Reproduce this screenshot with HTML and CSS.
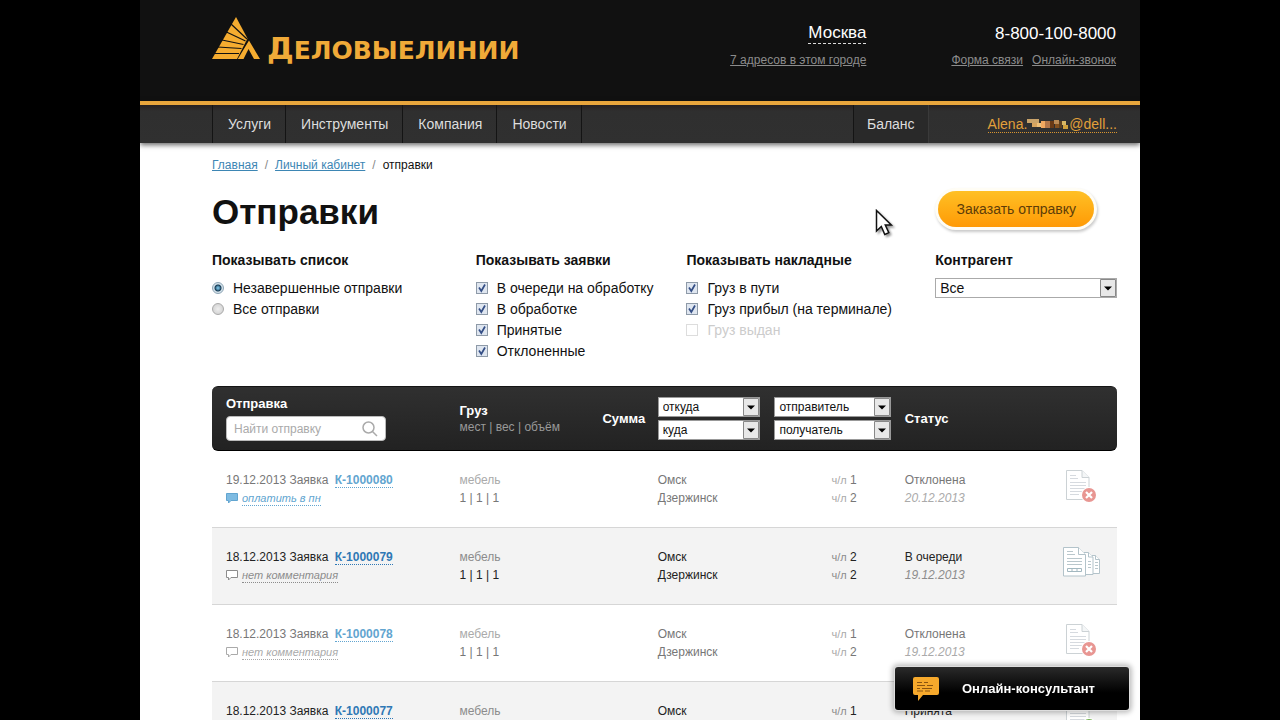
FILE: index.html
```html
<!DOCTYPE html>
<html lang="ru">
<head>
<meta charset="utf-8">
<meta name="viewport" content="width=device-width, initial-scale=1">
<title>Отправки</title>
<link rel="stylesheet" href="styles.css">
</head>
<body>
<svg class="sprite" aria-hidden="true">
  <symbol id="doc" viewBox="0 0 24 30">
    <path d="M.5.5h15.500l7 7v22H.5z" fill="#fff" stroke="#ccd2d5"/>
    <path d="M16 .5v7h7" fill="#f4f6f7" stroke="#ccd2d5"/>
    <path d="M4 5.500h6M4 8.500h8M4 12.500h16M4 15.500h16M4 18.500h16M4 21.500h16M4 24.500h9" stroke="#d6dadf"/>
  </symbol>
  <symbol id="doc-rejected" viewBox="0 0 32 34">
    <use href="#doc" width="24" height="30"/>
    <circle cx="23" cy="25" r="8" fill="#fff"/>
    <circle cx="23" cy="25" r="7" fill="#e89692"/>
    <path d="M20 22l6 6M26 22l-6 6" stroke="#fff" stroke-width="2.200"/>
  </symbol>
  <symbol id="doc-accepted" viewBox="0 0 32 34">
    <use href="#doc" width="24" height="30"/>
    <circle cx="23" cy="25" r="8" fill="#fff"/>
    <circle cx="23" cy="25" r="7" fill="#6fae4a"/>
    <path d="M19.500 25l2.500 3 4.500-6" fill="none" stroke="#fff" stroke-width="2"/>
  </symbol>
  <symbol id="doc-queue" viewBox="0 0 38 30">
    <g fill="#fff" stroke="#b3c3ca">
      <path d="M24.500 8.500h8l4 4v14h-12z"/><path d="M32.500 8.500v4h4"/>
      <path d="M18.500 5.500h7l4.500 4.500v17.500h-11.500z"/><path d="M25.500 5.500v4.500h4.500"/>
      <path d="M.5.500h15l7 7v21.500h-22z"/><path d="M15.500.500v7h7"/>
    </g>
    <path d="M4 4.500h6M4 7.500h8M4 11.500h15M4 14.500h15M4 17.500h15M25 14.500h3M25 17.500h3M25 20.500h3M32 15.500h3M32 18.500h3M32 21.500h3" stroke="#b9c7cc"/>
    <path d="M4.500 21.500h14v3h-14zM9 21.500v3M14 21.500v3" fill="none" stroke="#a3b8c0"/>
  </symbol>
  <symbol id="note" viewBox="0 0 12 11">
    <path d="M.5.500h11v7H5L2.500 10V7.500h-2z"/>
  </symbol>
</svg>

<div class="page">
  <header class="top">
    <a class="logo" href="#">
      <svg class="logo-mark" viewBox="0 0 48 42" aria-hidden="true">
        <path d="M24 0L35.500 21.500L25 42H0z" fill="#f5ac30"/>
        <path d="M37 23.500L48 42H42L36.500 32L31.500 42H25.800z" fill="#f5ac30"/>
        <path d="M35 22L19 7M33.500 24L14.500 15M31.500 27.500L10 23M29.500 31.500L5.500 30M27 36.500L1 36.500" fill="none" stroke="#111" stroke-width="1.200"/>
      </svg>
      <span class="logo-name"><span class="logo-cap">Д</span>ЕЛОВЫЕЛИНИИ</span>
    </a>
    <div class="city">
      <a class="city-name" href="#">Москва</a>
      <a class="sub" href="#">7 адресов в этом городе</a>
    </div>
    <div class="phone">
      <span class="number">8-800-100-8000</span>
      <span class="phone-links"><a class="sub" href="#">Форма связи</a><a class="sub" href="#">Онлайн-звонок</a></span>
    </div>
  </header>

  <nav class="nav">
    <ul class="menu">
      <li><a href="#">Услуги</a></li>
      <li><a href="#">Инструменты</a></li>
      <li><a href="#">Компания</a></li>
      <li><a href="#">Новости</a></li>
    </ul>
    <a class="balance" href="#">Баланс</a>
    <a class="account" href="#">Alena.<svg class="mosaic" viewBox="0 0 42 12" aria-hidden="true">
      <path d="M0 0h12v4H0z" fill="#c9a36a"/><path d="M5 4h5v4H5z" fill="#d7a45f"/><path d="M10 4h5v4h-5z" fill="#eec07a"/><path d="M14 2h4v7h-4z" fill="#f2a860"/>
      <path d="M18 2h5v7h-5z" fill="#b3764a"/><path d="M23 2h4v7h-4z" fill="#693a16"/><path d="M27 1h5v4h-5z" fill="#b98a55"/><path d="M28 5h4v4h-4z" fill="#83501f"/>
      <path d="M32 2h3v7h-3z" fill="#5c4020"/><path d="M35 2h4v4h-4z" fill="#d8b765"/><path d="M36 6h5v4h-5z" fill="#d0a13c"/></svg>@dell...</a>
  </nav>

  <main class="content">
    <ol class="crumbs">
      <li><a href="#">Главная</a></li>
      <li><a href="#">Личный кабинет</a></li>
      <li>отправки</li>
    </ol>
    <div class="heading">
      <h1>Отправки</h1>
      <button class="order" type="button">Заказать отправку</button>
    </div>

    <form class="filters">
      <fieldset>
        <legend>Показывать список</legend>
        <label class="option"><input type="radio" name="list" checked>Незавершенные отправки</label>
        <label class="option"><input type="radio" name="list">Все отправки</label>
      </fieldset>
      <fieldset>
        <legend>Показывать заявки</legend>
        <label class="option"><input type="checkbox" checked>В очереди на обработку</label>
        <label class="option"><input type="checkbox" checked>В обработке</label>
        <label class="option"><input type="checkbox" checked>Принятые</label>
        <label class="option"><input type="checkbox" checked>Отклоненные</label>
      </fieldset>
      <fieldset>
        <legend>Показывать накладные</legend>
        <label class="option"><input type="checkbox" checked>Груз в пути</label>
        <label class="option"><input type="checkbox" checked>Груз прибыл (на терминале)</label>
        <label class="option disabled"><input type="checkbox" disabled>Груз выдан</label>
      </fieldset>
      <div class="partner">
        <label for="partner">Контрагент</label>
        <select class="select" id="partner"><option>Все</option></select>
      </div>
    </form>

    <table class="orders">
      <colgroup><col class="c-order"><col class="c-cargo"><col class="c-sum"><col class="c-route"><col class="c-party"><col class="c-status"><col class="c-doc"></colgroup>
      <thead>
        <tr>
          <th scope="col">
            <label for="find">Отправка</label>
            <span class="search">
              <input id="find" type="text" placeholder="Найти отправку">
              <svg viewBox="0 0 16 16" aria-hidden="true"><circle cx="6.500" cy="6.500" r="5.500"/><path d="M10.500 10.500l4.500 4.500"/></svg>
            </span>
          </th>
          <th scope="col">Груз<span class="hint">мест | вес | объём</span></th>
          <th scope="col">Сумма</th>
          <th scope="col"><span class="pair">
            <select class="select small" aria-label="Откуда"><option>откуда</option></select>
            <select class="select small" aria-label="Куда"><option>куда</option></select></span></th>
          <th scope="col"><span class="pair">
            <select class="select small" aria-label="Отправитель"><option>отправитель</option></select>
            <select class="select small" aria-label="Получатель"><option>получатель</option></select></span></th>
          <th scope="col">Статус</th>
          <td></td>
        </tr>
      </thead>
      <tbody>
        <tr class="muted">
          <td>19.12.2013 Заявка <a class="code" href="#">К-1000080</a><div class="comment filled"><svg aria-hidden="true"><use href="#note"/></svg><a href="#">оплатить в пн</a></div></td>
          <td><span class="soft">мебель</span><br>1 | 1 | 1</td>
          <td></td>
          <td>Омск<br>Дзержинск</td>
          <td class="party"><small>ч/л</small> 1<br><small>ч/л</small> 2</td>
          <td>Отклонена<br><i class="soft">20.12.2013</i></td>
          <td class="doc"><svg class="icon" aria-hidden="true"><use href="#doc-rejected"/></svg></td>
        </tr>
        <tr class="shaded">
          <td>18.12.2013 Заявка <a class="code" href="#">К-1000079</a><div class="comment"><svg aria-hidden="true"><use href="#note"/></svg><a href="#">нет комментария</a></div></td>
          <td><span class="soft">мебель</span><br>1 | 1 | 1</td>
          <td></td>
          <td>Омск<br>Дзержинск</td>
          <td class="party"><small>ч/л</small> 2<br><small>ч/л</small> 2</td>
          <td>В очереди<br><i class="soft">19.12.2013</i></td>
          <td class="doc"><svg class="icon queue" aria-hidden="true"><use href="#doc-queue"/></svg></td>
        </tr>
        <tr class="muted">
          <td>18.12.2013 Заявка <a class="code" href="#">К-1000078</a><div class="comment"><svg aria-hidden="true"><use href="#note"/></svg><a href="#">нет комментария</a></div></td>
          <td><span class="soft">мебель</span><br>1 | 1 | 1</td>
          <td></td>
          <td>Омск<br>Дзержинск</td>
          <td class="party"><small>ч/л</small> 1<br><small>ч/л</small> 2</td>
          <td>Отклонена<br><i class="soft">19.12.2013</i></td>
          <td class="doc"><svg class="icon" aria-hidden="true"><use href="#doc-rejected"/></svg></td>
        </tr>
        <tr class="shaded">
          <td>18.12.2013 Заявка <a class="code" href="#">К-1000077</a></td>
          <td><span class="soft">мебель</span></td>
          <td></td>
          <td>Омск</td>
          <td class="party"><small>ч/л</small> 1</td>
          <td>Принята</td>
          <td class="doc"><svg class="icon" aria-hidden="true"><use href="#doc-accepted"/></svg></td>
        </tr>
      </tbody>
    </table>
  </main>

  <svg class="cursor" viewBox="0 0 20 30" aria-hidden="true"><path d="M1.500 1.500v20.500l4.800-4.500 3.500 8 4-1.800-3.500-7.700h6z" fill="#fff" stroke="#111" stroke-width="1.500"/></svg>
</div>

<button class="consultant" type="button">
  <svg viewBox="0 0 26 24" aria-hidden="true">
    <path d="M2 0h22q2 0 2 2v14q0 2-2 2H10l-5 6v-6H2q-2 0-2-2V2q0-2 2-2z" fill="#f6a92c"/>
    <path d="M4 5.500h5M11 5.500h4M4 8.500h8M14 8.500h6M4 11.500h3M9 11.500h10M4 14h6M12 14h5" stroke="#8a5410"/>
  </svg>
  Онлайн-консультант
</button>
</body>
</html>
```
FILE: styles.css
```css
* { box-sizing: border-box; }

body {
  margin: 0;
  background: #000;
  color: #111;
  font: 13px/18px "Liberation Sans", Arial, sans-serif;
}

button, input, select { font-family: inherit; }
ul, ol { margin: 0; padding: 0; list-style: none; }
.sprite { position: absolute; width: 0; height: 0; }

.page {
  position: relative;
  max-width: 1000px;
  min-height: 100vh;
  margin: 0 auto;
  background: #fff;
}

/* Header */
.top {
  display: flex;
  align-items: flex-start;
  min-height: 101px;
  padding: 17px 24px 0 72px;
  background: #111;
}
.logo { display: flex; gap: 7px; color: #f0aa38; text-decoration: none; }
.logo-mark { width: 48px; height: 42px; }
.logo-name { padding-top: 20px; font: bold 25px/24px "DejaVu Sans", sans-serif; }
.logo-cap { font-size: 30px; }
.city, .phone { display: flex; flex-direction: column; align-items: flex-end; gap: 8px; padding-top: 6px; }
.city { margin-left: auto; }
.phone { margin-left: 85px; }
.city-name { border-bottom: 1px dashed #ddd; color: #fff; font-size: 17px; line-height: 20px; text-decoration: none; }
.number { color: #fff; font-size: 17px; line-height: 21px; }
.phone-links { display: flex; gap: 9px; }
.sub { color: #8c8c8c; font-size: 12px; line-height: 16px; }

.nav {
  display: flex;
  position: relative;
  height: 42px;
  padding: 0 23px 0 72px;
  border-top: 4px solid #e8a53c;
  background: linear-gradient(#262020, #2f2f2f 6px, #303030);
  box-shadow: 0 2px 5px rgba(0, 0, 0, .6);
  font-size: 14px;
  line-height: 38px;
}
.menu { display: flex; border-left: 1px solid #141414; }
.menu li { border-right: 1px solid #141414; }
.menu a { display: block; padding: 0 14px 0 15px; color: #ddd; text-decoration: none; }
.balance { margin-left: auto; padding: 0 13px; border-left: 1px solid #141414; border-right: 1px solid #3a3a3a; background: #292929; color: #ddd; text-decoration: none; }
.account { align-self: center; margin-left: 59px; border-bottom: 1px dotted #d9952f; color: #e2a03a; line-height: 16px; text-decoration: none; }
.mosaic { width: 42px; height: 12px; vertical-align: -2px; }

/* Title */
.content { padding: 14px 23px 0 72px; }
.crumbs { display: flex; font-size: 12px; line-height: 16px; }
.crumbs li + li::before { content: "/"; padding: 0 7px; color: #888; }
.crumbs a { color: #3d86b4; }
.heading { display: flex; justify-content: space-between; align-items: flex-start; margin-top: 18px; padding-right: 23px; }
h1 { margin: 0; font-size: 35px; line-height: 42px; }
.order {
  height: 36px;
  padding: 0 18px;
  border: 0;
  border-radius: 18px;
  background: linear-gradient(#ffc025, #ff9a05);
  box-shadow: 0 0 0 3px #fffdf5, 1px 2px 3px 3px #c9c9c9;
  color: #5d3d08;
  font-size: 14px;
}

/* Filters */
.filters { display: grid; grid-template-columns: 264fr 211fr 249fr 182fr; margin-top: 18px; min-height: 135px; }
fieldset { min-width: 0; margin: 0; padding: 0; border: 0; }
legend, .partner label { display: block; margin-bottom: 9px; padding: 0; font-size: 14px; font-weight: bold; line-height: 18px; }
.option { display: flex; align-items: center; gap: 9px; font-size: 14px; line-height: 21px; white-space: nowrap; }
.option input { flex: none; appearance: none; width: 12px; height: 12px; margin: 0 0 2px; border: 1px solid #8e9aa8; background: #dfe6f0; }
.option input[type="radio"] { border-color: #aaa; border-radius: 50%; background: radial-gradient(#eee, #ccc); }
.option input[type="radio"]:checked { border-color: #8ea5b5; background: radial-gradient(circle, #6fb2d4 0 1px, #173b54 3px, #d4e2eb 4px); }
.option input[type="checkbox"]:checked { background: #dfe6f0 url("data:image/svg+xml,%3Csvg xmlns='http://www.w3.org/2000/svg' viewBox='0 0 10 10'%3E%3Cpath d='M2 4.500L4.300 8L8 1.500' fill='none' stroke='%23354f86' stroke-width='1.700'/%3E%3C/svg%3E") center / 10px 10px; }
.option input:disabled { border-color: #ddd; background: #fff; }
.disabled { color: #ccc; }

.select {
  appearance: none;
  display: block;
  width: 100%;
  height: 20px;
  padding: 0 20px 0 4px;
  border: 1px solid #aaa;
  border-radius: 0;
  background: #fff url("data:image/svg+xml,%3Csvg xmlns='http://www.w3.org/2000/svg' viewBox='0 0 16 18'%3E%3Cpath d='M.5.500h15v17H.5z' fill='%23e8e8e8' stroke='%23888'/%3E%3Cpath d='M4 7.500h8l-4 4z'/%3E%3C/svg%3E") right center / 16px 18px no-repeat;
  color: #111;
  font-size: 14px;
}
.small { font-size: 12px; border: 1px solid #999; }

/* Orders */
.orders { width: 100%; table-layout: fixed; border-spacing: 0; }
.c-order { width: 25.800%; }
.c-cargo { width: 15.800%; }
.c-sum { width: 6.100%; }
.c-route { width: 12.900%; }
.c-party { width: 14.400%; }
.c-status { width: 17.500%; }
.c-doc { width: 7.500%; }
thead th, thead td {
  height: 65px;
  padding: 0 0 0 14px;
  border-top: 1px solid #151515;
  border-bottom: 1px solid #000;
  background: linear-gradient(#303030, #222);
  color: #fff;
  text-align: left;
  line-height: 16px;
}
thead th:first-child { border-top-left-radius: 6px; border-bottom-left-radius: 6px; }
thead td { border-top-right-radius: 6px; border-bottom-right-radius: 6px; }
.hint { display: block; color: #999; font-size: 12px; font-weight: normal; }
.pair { display: grid; gap: 3px; }
.search { display: flex; align-items: center; width: 160px; height: 25px; margin-top: 4px; padding: 0 7px; border: 1px solid #bbb; border-radius: 4px; background: #fff; }
.search input { flex: 1; min-width: 0; padding: 0; border: 0; outline: 0; background: none; font-size: 12px; }
.search input::placeholder { color: #aaa; }
.search svg { width: 16px; height: 16px; fill: none; stroke: #aaa; stroke-width: 1.500; }

tbody tr { --ink: #222; --soft: #8c8c8c; --link: #2f78b5; }
tbody .muted { --ink: #777; --soft: #aaa; --link: #62a5d0; }
tbody td { height: 77px; padding: 20px 0 18px 14px; border-bottom: 1px solid #d6d6d6; color: var(--ink); font-size: 12px; vertical-align: top; white-space: nowrap; }
.shaded td { background: #f3f3f3; }
.soft { color: var(--soft); }
.code { margin-left: 3px; border-bottom: 1px dotted var(--link); color: var(--link); font-weight: bold; text-decoration: none; }
.comment { display: flex; align-items: center; gap: 4px; margin-top: 2px; color: var(--soft); font-size: 11px; font-style: italic; }
.comment a { border-bottom: 1px dotted currentColor; color: inherit; line-height: 14px; text-decoration: none; }
.comment svg { width: 12px; height: 11px; fill: #fff; stroke: currentColor; }
.filled { color: #62a5d0; }
.filled svg { fill: #7ebbe2; }
.party { padding-right: 34px; text-align: right; }
.party small { color: var(--soft); font-size: 11px; }
.orders .doc { padding: 19px 0 0 17px; }
.icon { display: block; width: 32px; height: 34px; }
.queue { width: 38px; height: 30px; margin-left: -3px; }

.cursor { position: absolute; top: 209px; left: 735px; width: 20px; height: 30px; filter: drop-shadow(2px 2px 1px rgba(0, 0, 0, .4)); }

.consultant {
  display: flex;
  position: fixed;
  right: max(11px, calc(50% - 489px));
  bottom: 10px;
  align-items: center;
  gap: 23px;
  width: 234px;
  height: 43px;
  padding: 0 18px;
  border: 0;
  border-radius: 3px;
  background: linear-gradient(#2a2a2a, #000 60%);
  box-shadow: 0 0 0 1px #ddd, 0 0 5px 3px rgba(0, 0, 0, .25);
  color: #fff;
  font-size: 13px;
  font-weight: bold;
  white-space: nowrap;
}
.consultant svg { flex: none; width: 26px; height: 24px; }
```
